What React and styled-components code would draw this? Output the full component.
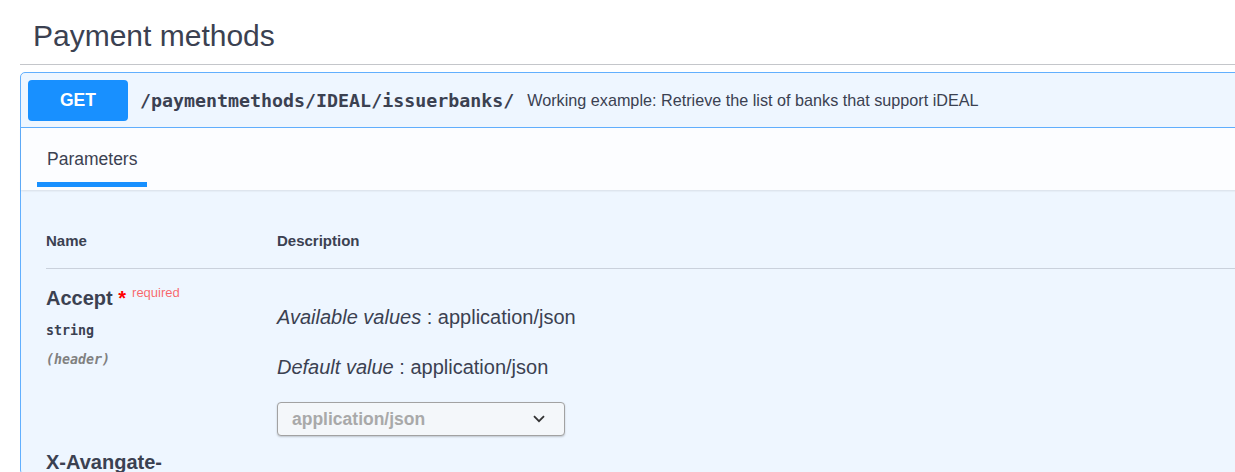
import React from "react";
import styled, { createGlobalStyle } from "styled-components";

const Global = createGlobalStyle`
  html, body { margin: 0; padding: 0; background: #fff; overflow: hidden; }
  body { font-family: "Liberation Sans", Arial, sans-serif; color: #3b4151; }
  * { box-sizing: border-box; }
`;

const Page = styled.div`
  width: 1330px;
  padding-left: 20px;
`;

const TagHeader = styled.div`
  padding: 19px 0 11px 13px;
  border-bottom: 1px solid rgba(59, 65, 81, 0.3);
`;

const TagTitle = styled.h4`
  margin: 0;
  font-size: 30px;
  line-height: 34px;
  font-weight: 400;
  color: #3b4151;
`;

const OpBlock = styled.div`
  margin-top: 7px;
  border: 1px solid #61affe;
  border-radius: 5px;
  background: #eef6ff;
`;

const Summary = styled.div`
  display: flex;
  align-items: center;
  height: 55px;
  padding: 0 7px;
  border-bottom: 1px solid #61affe;
`;

const Method = styled.span`
  display: flex;
  align-items: center;
  justify-content: center;
  width: 100px;
  height: 41px;
  border-radius: 4px;
  background: #1890ff;
  color: #fff;
  font-weight: 700;
  font-size: 17.5px;
`;

const Path = styled.span`
  margin-left: 12px;
  padding-right: 13px;
  font-family: "DejaVu Sans Mono", "Liberation Mono", monospace;
  font-weight: 700;
  font-size: 18.3px;
  color: #3b4151;
`;

const SummaryText = styled.span`
  font-size: 16.2px;
  color: #3b4151;
`;

const TabHeader = styled.div`
  display: flex;
  align-items: flex-start;
  height: 62px;
  padding-left: 16px;
  background: rgba(255, 255, 255, 0.8);
  box-shadow: 0 1px 2px rgba(0, 0, 0, 0.1);
`;

const Tab = styled.div`
  padding: 21px 10px 13px;
  border-bottom: 5px solid ${(p) => (p.$active ? "#1890ff" : "transparent")};
  font-size: 17.5px;
  line-height: 20px;
  color: #3b4151;
`;

const Params = styled.div`
  padding: 0 0 0 25px;
`;

const Row = styled.div`
  display: grid;
  grid-template-columns: 231px 1fr;
`;

const HeadRow = styled(Row)`
  padding: 42px 0 19px;
  border-bottom: 1px solid rgba(59, 65, 81, 0.2);
  font-size: 15px;
  line-height: 17px;
  font-weight: 700;
`;

const NameCell = styled.div`
  padding-top: 12px;
`;

const ParamName = styled.div`
  font-size: 20px;
  line-height: 23px;
  font-weight: 700;
  color: #3b4151;
  white-space: nowrap;
`;

const Star = styled.span`
  color: red;
`;

const Required = styled.span`
  padding-left: 6px;
  font-size: 13px;
  font-weight: 400;
  color: rgba(255, 0, 0, 0.6);
  vertical-align: 7.5px;
`;

const Type = styled.div`
  margin-top: 13px;
  font-family: "DejaVu Sans Mono", "Liberation Mono", monospace;
  font-weight: 700;
  font-size: 13.3px;
  line-height: 16px;
  color: #3b4151;
`;

const In = styled(Type)`
  font-style: italic;
  color: #808080;
`;

const DescCell = styled.div`
  padding: 37px 0 3px;
`;

const Para = styled.p`
  margin: 0;
  font-size: 20px;
  line-height: 23px;
  color: #3b4151;
  & + & {
    margin-top: 27px;
  }
`;

const Select = styled.div`
  display: flex;
  align-items: center;
  justify-content: space-between;
  width: 288px;
  height: 34px;
  margin-top: 23px;
  padding: 0 19px 0 14px;
  border: 1px solid #a2a2a2;
  border-radius: 4px;
  background: #f4f7fa;
  box-shadow: 0 1px 2px rgba(0, 0, 0, 0.2);
  font-size: 17.5px;
  font-weight: 700;
  color: #a9a9a9;
`;

const Chevron = () => (
  <svg width="12" height="8" viewBox="0 0 12 8" fill="none">
    <path d="M1 1.2l5 5 5-5" stroke="#333" strokeWidth="1.8" />
  </svg>
);

export default function App() {
  return (
    <Page>
      <Global />
      <TagHeader>
        <TagTitle>Payment methods</TagTitle>
      </TagHeader>
      <OpBlock>
        <Summary>
          <Method>GET</Method>
          <Path>/paymentmethods/IDEAL/issuerbanks/</Path>
          <SummaryText>
            Working example: Retrieve the list of banks that support iDEAL
          </SummaryText>
        </Summary>
        <TabHeader>
          <Tab $active>Parameters</Tab>
        </TabHeader>
        <Params>
          <HeadRow>
            <div>Name</div>
            <div>Description</div>
          </HeadRow>
          <Row>
            <NameCell>
              <ParamName>
                Accept<Star>&nbsp;*</Star>
                <Required>required</Required>
              </ParamName>
              <Type>string</Type>
              <In>(header)</In>
            </NameCell>
            <DescCell>
              <Para>
                <i>Available values</i> : application/json
              </Para>
              <Para>
                <i>Default value</i> : application/json
              </Para>
              <Select>
                <span>application/json</span>
                <Chevron />
              </Select>
            </DescCell>
          </Row>
          <Row>
            <NameCell>
              <ParamName>X-Avangate-</ParamName>
            </NameCell>
            <div />
          </Row>
        </Params>
      </OpBlock>
    </Page>
  );
}
